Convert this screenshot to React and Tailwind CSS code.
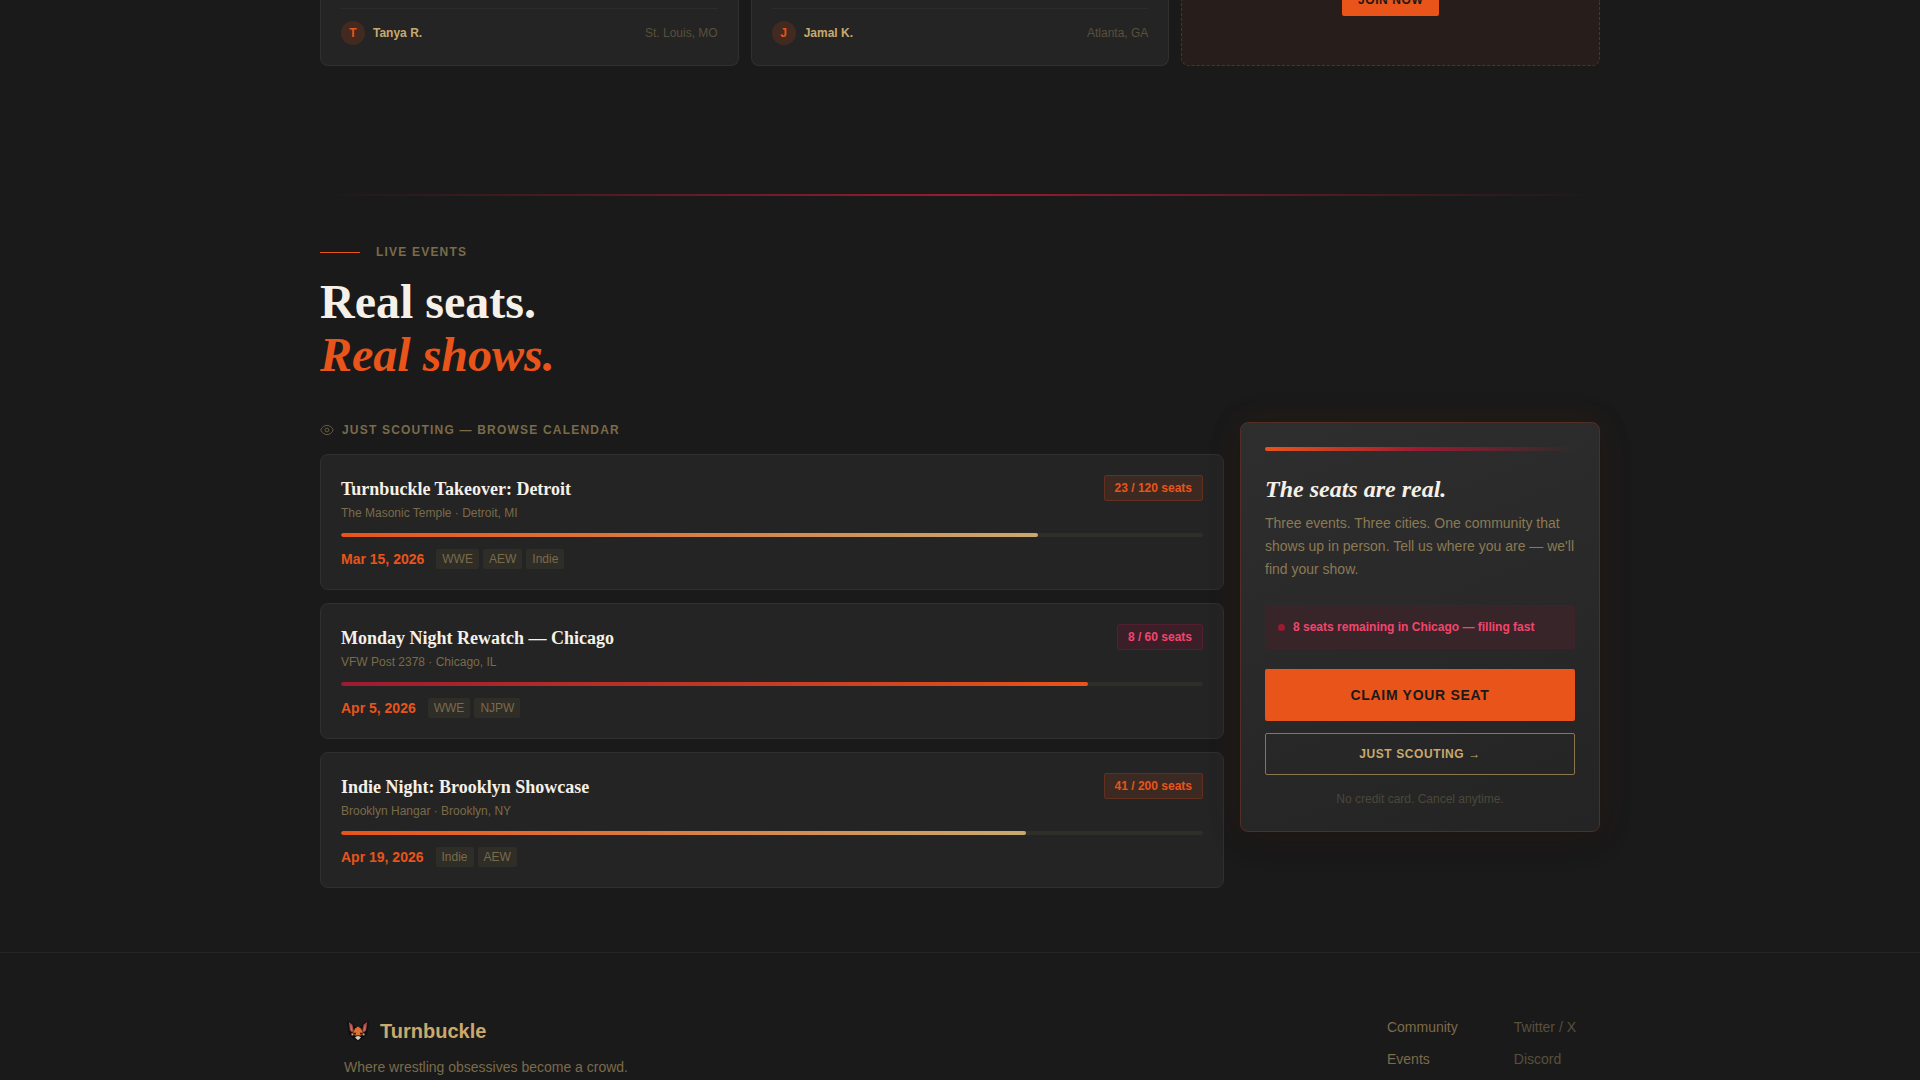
import React from 'react';
import { clsx } from 'clsx';

const members = [
  { initial: 'T', name: 'Tanya R.', city: 'St. Louis, MO' },
  { initial: 'J', name: 'Jamal K.', city: 'Atlanta, GA' },
];

const events = [
  {
    title: 'Turnbuckle Takeover: Detroit',
    venue: 'The Masonic Temple · Detroit, MI',
    left: 23,
    total: 120,
    date: 'Mar 15, 2026',
    tags: ['WWE', 'AEW', 'Indie'],
  },
  {
    title: 'Monday Night Rewatch — Chicago',
    venue: 'VFW Post 2378 · Chicago, IL',
    left: 8,
    total: 60,
    date: 'Apr 5, 2026',
    tags: ['WWE', 'NJPW'],
    urgent: true,
  },
  {
    title: 'Indie Night: Brooklyn Showcase',
    venue: 'Brooklyn Hangar · Brooklyn, NY',
    left: 41,
    total: 200,
    date: 'Apr 19, 2026',
    tags: ['Indie', 'AEW'],
  },
];

function EyeIcon() {
  return (
    <svg width="14" height="14" viewBox="0 0 14 14" fill="none" stroke="currentColor" aria-hidden="true">
      <path d="M0.7 7C2 4.1 4.3 2.4 7 2.4S12 4.1 13.3 7C12 9.9 9.7 11.6 7 11.6S2 9.9 0.7 7Z" strokeWidth="0.8" />
      <circle cx="7" cy="7" r="1.9" strokeWidth="0.8" />
    </svg>
  );
}

// Masked fox used as the brand mark
function Logo() {
  return (
    <svg width="28" height="28" viewBox="0 0 28 28" aria-hidden="true">
      <path d="M3.2 3.6 9 6.4 11.2 10.4h5.6L19 6.4l5.8-2.8-.8 9.2-1.400 5.400L18.400 22 14 24.600 9.600 22 5.400 18.200 4 12.800Z" fill="#0f0f14" />
      <path d="M4.800 5 8.400 7.600 9.800 14 8.200 15.600 5.900 13.400Z" fill="#a5463c" />
      <path d="M23.200 5 19.600 7.600 18.200 14 19.800 15.600 22.100 13.400Z" fill="#a5463c" />
      <path d="M6.200 7.600 7.400 8.400 8.600 13.600 7.900 14.200 6.700 12.800Z" fill="#c56f6c" />
      <path d="M21.800 7.600 20.600 8.400 19.400 13.600 20.100 14.200 21.300 12.800Z" fill="#c56f6c" />
      <path d="M14 9.600 16.800 11.400 18.800 15.200 17.200 18.400H10.800L9.200 15.200 11.200 11.400Z" fill="#e0702f" />
      <circle cx="11" cy="16.600" r="1.100" fill="#3a1c10" />
      <circle cx="17" cy="16.600" r="1.100" fill="#3a1c10" />
      <circle cx="8.400" cy="17.400" r="1.100" fill="#b9a88f" />
      <circle cx="19.600" cy="17.400" r="1.100" fill="#b9a88f" />
      <path d="M14 18.400 17 20.600 14 23.200 11 20.600Z" fill="#d8cdb9" />
      <path d="M13 18.200h2L14 19.600Z" fill="#1a1210" />
    </svg>
  );
}

function MemberCard({ member }) {
  return (
    <div className="rounded-b-lg border border-t-0 border-[#303030] bg-[#242424] px-5 pt-2 pb-5">
      <div className="flex items-center gap-2 border-t border-[#2c2c2b] pt-3">
        <span className="flex size-6 items-center justify-center rounded-full bg-[#432a20] text-xs font-bold text-[#e8541a]">
          {member.initial}
        </span>
        <span className="text-xs font-bold text-[#c9a96e]">{member.name}</span>
        <span className="ml-auto text-xs text-[#58503c]">{member.city}</span>
      </div>
    </div>
  );
}

function EventCard({ event }) {
  const sold = ((event.total - event.left) / event.total) * 100;

  return (
    <article className="rounded-lg border border-[#303030] bg-[#242424] p-5">
      <div className="mb-3 flex items-start justify-between">
        <div>
          <h3 className="font-['Liberation_Serif',serif] text-lg leading-7 font-bold text-[#f5f0e8]">{event.title}</h3>
          <p className="mt-0.5 text-xs text-[#7a6b4a]">{event.venue}</p>
        </div>
        <span
          className={clsx(
            'rounded-xs border px-2.5 py-1 text-xs font-bold',
            event.urgent
              ? 'border-[#51202f] bg-[#3a1f29] text-[#f2456d]'
              : 'border-[#61301f] bg-[#3b2922] text-[#e8541a]'
          )}>
          {event.left} / {event.total} seats
        </span>
      </div>
      <div className="h-1 overflow-hidden rounded-full bg-[#2f2e29]">
        <div
          className={clsx(
            'h-full rounded-full bg-linear-to-r/srgb',
            event.urgent ? 'from-[#9b1b30] to-[#e8541a]' : 'from-[#e8541a] to-[#c9a96e]'
          )}
          style={{ width: `${sold}%` }}
        />
      </div>
      <div className="mt-3 flex items-center gap-3">
        <span className="text-sm font-bold text-[#e8541a]">{event.date}</span>
        <div className="flex gap-1">
          {event.tags.map((tag) => (
            <span key={tag} className="rounded-xs bg-[#2f2d28] px-1.5 py-0.5 text-xs text-[#7a6b4a]">{tag}</span>
          ))}
        </div>
      </div>
    </article>
  );
}

function SeatPanel() {
  return (
    <aside className="rounded-lg border border-[#512f24] bg-linear-160/srgb from-[#2e2e2e] to-[#242424] p-6 shadow-[0_0_40px_rgba(232,84,26,0.07),0_8px_32px_rgba(0,0,0,0.2)]">
      <div className="mb-6 h-1 rounded-full bg-linear-to-r/srgb from-[#e8541a] via-[#9b1b30] to-transparent" />
      <h3 className="font-['Liberation_Serif',serif] text-2xl leading-7 font-bold text-[#f5f0e8] italic">The seats are real.</h3>
      <p className="mt-[9px] text-sm leading-[23px] text-[#8a7a55]">
        Three events. Three cities. One community that shows up in person. Tell us where you are — we'll find your show.
      </p>
      <div className="mt-6 flex items-center gap-2 rounded-xs border border-[#3f222b] bg-[#38252a] px-3 py-3 text-xs leading-[18px] font-bold text-[#f2456d]">
        <span className="size-[7px] rounded-full bg-[#9b1b30]" />
        8 seats remaining in Chicago — filling fast
      </div>
      <button type="button" className="mt-5 w-full rounded-xs bg-[#e8541a] py-4 text-sm font-bold tracking-wider text-[#1a1a1a] uppercase">
        Claim your seat
      </button>
      <button type="button" className="mt-3 w-full rounded-xs border border-[#8a7650] py-3 text-xs font-bold tracking-wider text-[#c9a96e] uppercase">
        Just scouting →
      </button>
      <p className="mt-4 text-center text-xs text-[#4b473b]">No credit card. Cancel anytime.</p>
    </aside>
  );
}

export default function App() {
  return (
    <div className="min-h-screen overflow-hidden bg-[#1a1a1a] font-['Liberation_Sans',Arial,sans-serif] text-[#f5f0e8]">
      <main className="mx-auto max-w-7xl">
        <section className="grid grid-cols-3 gap-3">
          {members.map((m) => (
            <MemberCard key={m.name} member={m} />
          ))}
          <div className="flex items-start justify-center rounded-b-lg border border-t-0 border-dashed border-[#5c2e20] bg-[#271d1a]">
            <button type="button" className="-mt-4 rounded-xs bg-[#e8541a] px-4 py-2 text-xs font-bold tracking-wider text-[#1a1a1a] uppercase">
              Join now
            </button>
          </div>
        </section>

        <div className="mt-32 h-0.5 bg-linear-to-r/srgb from-transparent via-[#9b1b30] to-transparent" />

        <section className="pt-12 pb-16">
          <div className="flex items-center gap-4">
            <span className="h-px w-10 bg-[#e8541a]" />
            <span className="text-xs font-bold tracking-widest text-[#7a6b4a] uppercase">Live events</span>
          </div>
          <h2 className="mt-[15px] font-['Liberation_Serif',serif] text-5xl leading-[53px] font-bold">
            Real seats.
            <br />
            <em className="text-[#e8541a]">Real shows.</em>
          </h2>

          <div className="mt-[41px] grid grid-cols-[1fr_360px] items-start gap-4">
            <div>
              <div className="flex items-center gap-2 text-[#7a6b4a]">
                <EyeIcon />
                <span className="text-xs font-bold tracking-widest uppercase">Just scouting — browse calendar</span>
              </div>
              <div className="mt-4 flex flex-col gap-[13px]">
                {events.map((e) => (
                  <EventCard key={e.title} event={e} />
                ))}
              </div>
            </div>
            <SeatPanel />
          </div>
        </section>
      </main>

      <footer className="border-t border-[#262624]">
        <div className="mx-auto flex max-w-7xl items-start justify-between px-6 pt-16">
          <div>
            <div className="flex items-center gap-2">
              <Logo />
              <span className="text-xl font-bold text-[#c9a96e]">Turnbuckle</span>
            </div>
            <p className="mt-3 text-sm text-[#7a6b4a]">Where wrestling obsessives become a crowd.</p>
          </div>
          <nav className="flex gap-14 text-sm">
            <div className="flex flex-col gap-3 text-[#7a6b4a]">
              <a href="#community">Community</a>
              <a href="#events">Events</a>
            </div>
            <div className="flex flex-col gap-3 text-[#58503c]">
              <a href="#twitter">Twitter / X</a>
              <a href="#discord">Discord</a>
            </div>
          </nav>
        </div>
      </footer>
    </div>
  );
}
